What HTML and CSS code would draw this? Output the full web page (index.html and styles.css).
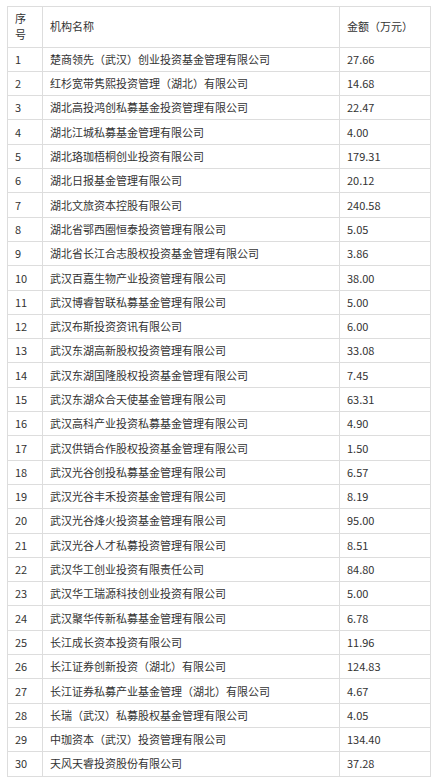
FILE: index.html
```html
<!DOCTYPE html>
<html lang="zh-CN">
<head>
<meta charset="utf-8">
<title>机构名称</title>
<link rel="stylesheet" href="styles.css">
</head>
<body>
<table class="list">
<colgroup><col class="c-no"><col class="c-name"><col class="c-amt"></colgroup>
<thead>
<tr class="head"><th>序号</th><th>机构名称</th><th>金额（万元）</th></tr>
</thead>
<tbody>
<tr><td>1</td><td>楚商领先（武汉）创业投资基金管理有限公司</td><td>27.66</td></tr>
<tr><td>2</td><td>红杉宽带隽熙投资管理（湖北）有限公司</td><td>14.68</td></tr>
<tr><td>3</td><td>湖北高投鸿创私募基金投资管理有限公司</td><td>22.47</td></tr>
<tr><td>4</td><td>湖北江城私募基金管理有限公司</td><td>4.00</td></tr>
<tr><td>5</td><td>湖北珞珈梧桐创业投资有限公司</td><td>179.31</td></tr>
<tr><td>6</td><td>湖北日报基金管理有限公司</td><td>20.12</td></tr>
<tr><td>7</td><td>湖北文旅资本控股有限公司</td><td>240.58</td></tr>
<tr><td>8</td><td>湖北省鄂西圈恒泰投资管理有限公司</td><td>5.05</td></tr>
<tr><td>9</td><td>湖北省长江合志股权投资基金管理有限公司</td><td>3.86</td></tr>
<tr><td>10</td><td>武汉百嘉生物产业投资管理有限公司</td><td>38.00</td></tr>
<tr><td>11</td><td>武汉博睿智联私募基金管理有限公司</td><td>5.00</td></tr>
<tr><td>12</td><td>武汉布斯投资资讯有限公司</td><td>6.00</td></tr>
<tr><td>13</td><td>武汉东湖高新股权投资管理有限公司</td><td>33.08</td></tr>
<tr><td>14</td><td>武汉东湖国隆股权投资基金管理有限公司</td><td>7.45</td></tr>
<tr><td>15</td><td>武汉东湖众合天使基金管理有限公司</td><td>63.31</td></tr>
<tr><td>16</td><td>武汉高科产业投资私募基金管理有限公司</td><td>4.90</td></tr>
<tr><td>17</td><td>武汉供销合作股权投资基金管理有限公司</td><td>1.50</td></tr>
<tr><td>18</td><td>武汉光谷创投私募基金管理有限公司</td><td>6.57</td></tr>
<tr><td>19</td><td>武汉光谷丰禾投资基金管理有限公司</td><td>8.19</td></tr>
<tr><td>20</td><td>武汉光谷烽火投资基金管理有限公司</td><td>95.00</td></tr>
<tr><td>21</td><td>武汉光谷人才私募投资管理有限公司</td><td>8.51</td></tr>
<tr><td>22</td><td>武汉华工创业投资有限责任公司</td><td>84.80</td></tr>
<tr><td>23</td><td>武汉华工瑞源科技创业投资有限公司</td><td>5.00</td></tr>
<tr><td>24</td><td>武汉聚华传新私募基金管理有限公司</td><td>6.78</td></tr>
<tr><td>25</td><td>长江成长资本投资有限公司</td><td>11.96</td></tr>
<tr><td>26</td><td>长江证券创新投资（湖北）有限公司</td><td>124.83</td></tr>
<tr><td>27</td><td>长江证券私募产业基金管理（湖北）有限公司</td><td>4.67</td></tr>
<tr><td>28</td><td>长瑞（武汉）私募股权基金管理有限公司</td><td>4.05</td></tr>
<tr><td>29</td><td>中珈资本（武汉）投资管理有限公司</td><td>134.40</td></tr>
<tr><td>30</td><td>天风天睿投资股份有限公司</td><td>37.28</td></tr>
</tbody>
</table>
</body>
</html>
```
FILE: styles.css
```css
html, body {
  margin: 0;
  padding: 0;
  background: #ffffff;
}
body {
  padding: 6px 0 0 7px;
  font-family: "Noto Sans CJK SC", "Noto Sans", sans-serif;
  font-size: 11px;
  color: #333333;
}
.list {
  border-collapse: collapse;
  table-layout: fixed;
  width: 423px;
}
.c-no { width: 35px; }
.c-name { width: 297px; }
.c-amt { width: 91px; }
.list th,
.list td {
  border: 1px solid #dddddd;
  padding: 3.25px 7px;
  line-height: 16.8px;
  text-align: left;
  vertical-align: middle;
  font-weight: normal;
  white-space: nowrap;
}
.list th {
  padding-top: 2.5px;
  padding-bottom: 3.5px;
}
.list th:first-child {
  white-space: normal;
  word-break: break-all;
}
```
